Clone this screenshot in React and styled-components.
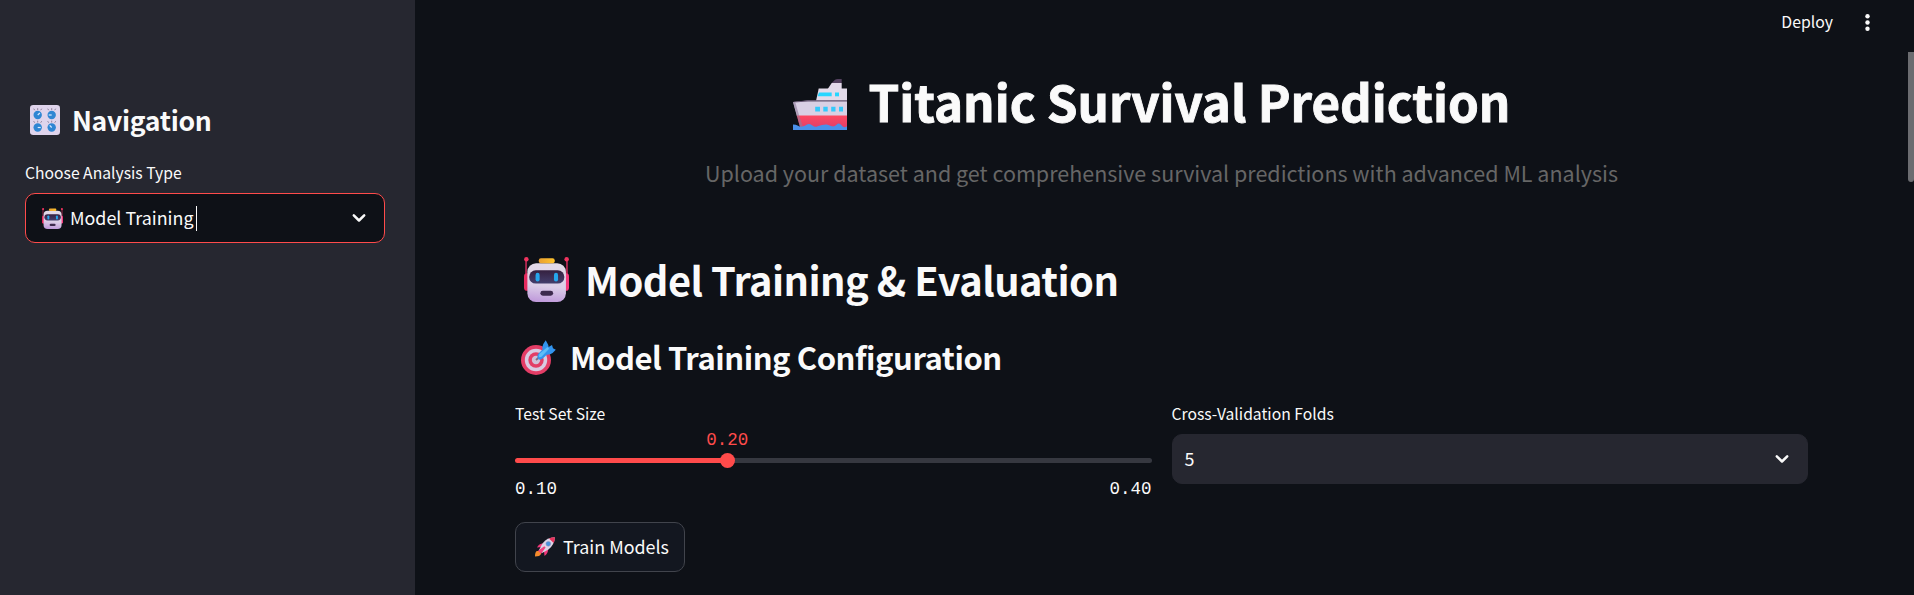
import React from 'react';
import styled, { createGlobalStyle } from 'styled-components';

const GlobalStyle = createGlobalStyle`
  *, *::before, *::after { box-sizing: border-box; }
  body { margin: 0; background: #0e1117; overflow: hidden; }
  h1, h2, h3, p { margin: 0; }
  svg { display: block; flex: none; }
`;

const Page = styled.div`
  display: flex;
  height: 100vh;
  overflow: hidden;
  background: #0e1117;
  color: #fafafa;
  font-family: "Noto Sans CJK SC", "Noto Sans", sans-serif;
  font-size: 17.9px;
`;

const Sidebar = styled.aside`
  flex: none;
  width: 415px;
  padding: 102px 30px 0 25px;
  background: #262730;
`;

const Main = styled.main`
  flex: 1;
  min-width: 0;
  display: flex;
  flex-direction: column;
`;

const Header = styled.header`
  flex: none;
  height: 52px;
  padding: 9px 39px 0 0;
  display: flex;
  justify-content: flex-end;
  gap: 27px;
`;

const DeployButton = styled.button`
  height: 26px;
  padding: 0;
  border: 0;
  background: none;
  color: inherit;
  font: 400 15.8px/26px "Noto Sans CJK SC", sans-serif;
`;

const MenuButton = styled.button`
  height: 27px;
  padding: 0;
  border: 0;
  background: none;
  color: inherit;
  display: flex;
  align-items: center;
`;

const ScrollArea = styled.div`
  flex: 1;
  display: flex;
`;

const Content = styled.section`
  flex: 1;
  padding: 17px 100px 0;
`;

const Scrollbar = styled.div`
  flex: none;
  width: 6px;
  height: 130px;
  background: #6b6c70;
  border-radius: 0 0 3px 3px;
`;

const Title = styled.h1`
  display: flex;
  justify-content: center;
  gap: 22px;
  height: 60px;
  padding: 10px 20px 0 0;
  font-size: 49.3px;
  line-height: 43px;
  font-weight: 700;
  white-space: nowrap;
  -webkit-text-stroke: 0.9px currentColor;

  svg { -webkit-text-stroke: 0; }
`;

const Subtitle = styled.p`
  margin-top: 26px;
  font-size: 21.5px;
  line-height: 36px;
  text-align: center;
  color: #666;
  white-space: nowrap;
`;

const SectionTitle = styled.h2`
  display: flex;
  align-items: center;
  gap: 16px;
  margin-top: 61px;
  padding-left: 9px;
  font-size: 39.8px;
  line-height: 54px;
  font-weight: 700;
  letter-spacing: -0.53px;
`;

const SubsectionTitle = styled.h3`
  display: flex;
  align-items: center;
  gap: 14px;
  margin-top: 30px;
  padding-left: 6px;
  font-size: 31px;
  line-height: 42px;
  font-weight: 700;
  letter-spacing: -0.45px;
`;

const NavTitle = styled.h2`
  display: flex;
  align-items: center;
  gap: 12px;
  padding-left: 5px;
  margin-bottom: 23px;
  font-size: 26.6px;
  line-height: 36px;
  font-weight: 700;
  letter-spacing: -0.3px;
`;

const Columns = styled.div`
  display: grid;
  grid-template-columns: 1fr 1fr;
  gap: 20px;
  margin-top: 24px;
`;

const Field = styled.div`
  display: flex;
  flex-direction: column;
`;

const Label = styled.label`
  font-size: 15.7px;
  line-height: 24px;
`;

const SelectBox = styled.div`
  display: flex;
  align-items: center;
  height: 50px;
  margin-top: 8px;
  padding: 0 15px 0 ${(p) => (p.$active ? '16px' : '12px')};
  border: 1px solid ${(p) => (p.$active ? '#ff4b4b' : '#262730')};
  border-radius: 10px;
  background: ${(p) => (p.$active ? '#0e1117' : '#262730')};
  line-height: 46px;
`;

const SelectValue = styled.span`
  flex: 1;
  display: flex;
  align-items: center;
`;

const ValueText = styled.span`
  margin-left: ${(p) => (p.$spaced ? '7px' : '0')};
  padding-bottom: 2px;
`;

const Caret = styled.i`
  width: 1px;
  height: 25px;
  margin-left: 2px;
  background: #fafafa;
`;

const Mono = styled.span`
  font-family: "Liberation Mono", monospace;
  font-size: 17.5px;
  line-height: 22px;
`;

const SliderValue = styled(Mono)`
  width: 42px;
  margin-left: calc(33.333% - 21px);
  margin-top: 3px;
  color: #ff4b4b;
`;

const Track = styled.div`
  display: flex;
  align-items: center;
  height: 15px;
  margin-top: 2px;
`;

const TrackPart = styled.span`
  flex: ${(p) => p.$share};
  height: 5px;
  border-radius: ${(p) => (p.$filled ? '3px 0 0 3px' : '0 3px 3px 0')};
  background: ${(p) => (p.$filled ? '#ff4b4b' : '#363840')};
`;

const Thumb = styled.span`
  flex: none;
  width: 15px;
  height: 15px;
  margin: 0 -7.5px;
  border-radius: 50%;
  background: #ff4b4b;
  z-index: 1;
`;

const Range = styled.div`
  display: flex;
  justify-content: space-between;
  margin-top: 10px;
`;

const ActionButton = styled.button`
  display: flex;
  align-items: center;
  gap: 8px;
  width: 170px;
  height: 50px;
  margin-top: 22px;
  padding: 0 0 0 19px;
  border: 1px solid #41444c;
  border-radius: 10px;
  background: #131720;
  color: inherit;
  font: 400 17.9px/46px "Noto Sans CJK SC", sans-serif;
  white-space: nowrap;
`;

const ButtonText = styled.span`
  padding-bottom: 2px;
`;

const ShipIcon = () => (
  <svg width="54" height="51" viewBox="0 0 54 51">
    <defs>
      <linearGradient id="hull" x1="0" y1="0" x2="0" y2="1">
        <stop offset="0" stopColor="#ff4860" />
        <stop offset="1" stopColor="#dd3f6b" />
      </linearGradient>
    </defs>
    <path d="M38.7 4h10v6h-14z" fill="#e3d9e9" />
    <path d="M42 .8Q43 0 44.500 0h4.200v4h-10z" fill="#54415f" />
    <path d="M25.700 9.500H54V22H23z" fill="#e3dbea" />
    <path d="M26 13.500h12.700v3.800H24.500z" fill="#27d6ff" />
    <path d="M42 13.500h4v3.800h-4z" fill="#27d6ff" />
    <path d="M0 23l15-1.500H54v16H4z" fill="#d9d0e4" />
    <path d="M1 22.800l14-1.600h39v1.200H15L0 23.500z" fill="#63536f" />
    <path d="M3.800 36.500H54V50H7.500z" fill="url(#hull)" />
    <path d="M0 23l4 13.500L7 48h3L6 36 2.500 24z" fill="#8f7b9b" opacity=".6" />
    <path d="M22.200 27.800H27v4.700h-4.800zM30.300 27.800h4.400v4.700h-4.400zM38.200 27.800h4.300v4.700h-4.300zM46 27.800h4v4.700h-4z" fill="#35c9fb" />
    <path d="M0 45.500q3 0 5 1.300t4.500.8 4.500-2 5 .6 5 1.300 5-1.500 4.500-.5 4.500 1.600 5.500-1.300 5 .5 5.500.9V51H0z" fill="#4a90ea" />
  </svg>
);

const RobotIcon = ({ size }) => (
  <svg width={size} height={size} viewBox="0 0 44 44">
    <defs>
      <linearGradient id="head" x1=".6" y1="0" x2=".5" y2="1">
        <stop offset="0" stopColor="#e3dbe8" />
        <stop offset=".6" stopColor="#dccfe8" />
        <stop offset="1" stopColor="#c09bdb" />
      </linearGradient>
      <linearGradient id="visor" x1="0" y1="0" x2="0" y2="1">
        <stop offset="0" stopColor="#35203f" />
        <stop offset="1" stopColor="#443f6d" />
      </linearGradient>
      <linearGradient id="cap" x1="0" y1="0" x2="1" y2="0">
        <stop offset="0" stopColor="#e9a032" />
        <stop offset="1" stopColor="#ffc42c" />
      </linearGradient>
    </defs>
    <path d="M2 2v16M42 2v16" stroke="#c22b58" strokeWidth="1.600" />
    <circle cx="2.300" cy="2.300" r="2.200" fill="#f0345f" />
    <circle cx="41.700" cy="2.300" r="2.200" fill="#f0345f" />
    <rect x="0" y="16" width="6" height="17" rx="3" fill="#e52a5f" />
    <rect x="38" y="16" width="6" height="17" rx="3" fill="#f43a7c" />
    <rect x="3.300" y="6" width="37.700" height="38" rx="8.500" fill="url(#head)" />
    <rect x="14.500" y="1.200" width="15.500" height="5" rx="2" fill="url(#cap)" />
    <rect x="5" y="13" width="34.500" height="13" rx="6.500" fill="url(#visor)" />
    <rect x="11.300" y="15.500" width="4" height="8.500" rx="2" fill="#25a6ec" />
    <rect x="29.300" y="15.500" width="4" height="8.500" rx="2" fill="#25a6ec" />
    <rect x="16" y="33" width="12.500" height="4.800" rx="2.400" fill="#3d2a4d" />
  </svg>
);

const TargetIcon = () => (
  <svg width="35" height="35" viewBox="0 0 35 35">
    <circle cx="15" cy="20" r="15" fill="#e33d66" />
    <circle cx="15" cy="20" r="11.200" fill="#d8cbe2" />
    <circle cx="15" cy="20" r="7.700" fill="#e33d66" />
    <circle cx="15" cy="20" r="4.200" fill="#cfc0d8" />
    <path d="M15 20l5-4.500" stroke="#777184" strokeWidth="1.800" />
    <path d="M17 18q-1.500-2.500.5-4.500l4-4q-.5-3 .8-5.500L24.700.3l2.600 4.700.3 2 3.400-2 1 3.200 2.800 1.600-3.200 3.200q-2.600 2-5.800 1.700l-3.800 3.600q-2.800 2.300-5 .7z" fill="#3294ee" />
    <path d="M18 17q-1-1.500.5-3.200L26.500 7l1.600 1.700-7 7.500q-1.700 1.800-3.100.8z" fill="#5fbdf8" />
  </svg>
);

const KNOBS = [
  { x: 7.700, y: 10, px: 2.200, py: -2 },
  { x: 21.700, y: 10, px: -3, py: 0 },
  { x: 7.700, y: 22.500, px: 3, py: 0 },
  { x: 21.700, y: 22.500, px: -2, py: -2.200 },
];

const KnobsIcon = () => (
  <svg width="30" height="30" viewBox="0 0 30 30">
    <rect width="30" height="30" rx="3.200" fill="#dfd4ec" />
    {KNOBS.map((k) => (
      <g key={`${k.x}-${k.y}`} transform={`translate(${k.x} ${k.y})`}>
        <path d="M0-5v-1.800M-3-4.800l-1-1.500M3-4.800l1-1.500" stroke="#796c85" strokeWidth=".8" />
        <circle r="4.200" fill="#2f86d3" />
        <path d={`M0 0L${k.px} ${k.py}`} stroke="#dcecff" strokeWidth="1.200" />
      </g>
    ))}
  </svg>
);

const RocketIcon = () => (
  <svg width="20" height="20" viewBox="0 0 20 20">
    <path d="M4.500 14q2 .5 1.500 3-1 2.500-6 2.500 0-5 2-5.500z" fill="#f58a2c" />
    <path d="M8 6.500Q4 6.500 2 10.500l5-.5zM13 12q.5 4-3.500 7l-.5-5z" fill="#f0387a" />
    <path d="M19.800.2Q12 .2 7.500 6.500L4 13l3 3 6.500-3.500Q19.800 7 19.800.2z" fill="#ddd3e6" />
    <path d="M19.800.2q-3-.1-5.800 1.200l4.700 4.600Q20 3 19.800.2z" fill="#e8325c" />
    <path d="M9.300 9.300l1.300 1.300-4.500 6.200L3 13.800z" fill="#f0437f" />
    <circle cx="13.300" cy="6.800" r="2.400" fill="#4b93df" stroke="#8a93b8" strokeWidth=".5" />
  </svg>
);

const ChevronIcon = () => (
  <svg width="20" height="20" viewBox="0 0 20 20">
    <path d="M4.800 7.300l5.200 5.200 5.200-5.200" fill="none" stroke="#fafafa" strokeWidth="2.500" strokeLinecap="round" strokeLinejoin="round" />
  </svg>
);

const DotsIcon = () => (
  <svg width="15" height="19" viewBox="0 0 15 19" fill="#fafafa">
    <circle cx="7.500" cy="3.200" r="2.200" />
    <circle cx="7.500" cy="9.500" r="2.200" />
    <circle cx="7.500" cy="15.800" r="2.200" />
  </svg>
);

export default function App() {
  return (
    <Page>
      <GlobalStyle />
      <Sidebar>
        <NavTitle>
          <KnobsIcon />
          Navigation
        </NavTitle>
        <Field>
          <Label>Choose Analysis Type</Label>
          <SelectBox $active>
            <SelectValue>
              <RobotIcon size={21} />
              <ValueText $spaced>Model Training</ValueText>
              <Caret />
            </SelectValue>
            <ChevronIcon />
          </SelectBox>
        </Field>
      </Sidebar>
      <Main>
        <Header>
          <DeployButton>Deploy</DeployButton>
          <MenuButton aria-label="Menu">
            <DotsIcon />
          </MenuButton>
        </Header>
        <ScrollArea>
          <Content>
            <Title>
              <ShipIcon />
              Titanic Survival Prediction
            </Title>
            <Subtitle>
              Upload your dataset and get comprehensive survival predictions with advanced ML analysis
            </Subtitle>
            <SectionTitle>
              <RobotIcon size={45} />
              Model Training &amp; Evaluation
            </SectionTitle>
            <SubsectionTitle>
              <TargetIcon />
              Model Training Configuration
            </SubsectionTitle>
            <Columns>
              <Field>
                <Label>Test Set Size</Label>
                <SliderValue>0.20</SliderValue>
                <Track>
                  <TrackPart $share={1} $filled />
                  <Thumb />
                  <TrackPart $share={2} />
                </Track>
                <Range>
                  <Mono>0.10</Mono>
                  <Mono>0.40</Mono>
                </Range>
              </Field>
              <Field>
                <Label>Cross-Validation Folds</Label>
                <SelectBox>
                  <SelectValue>
                    <ValueText>5</ValueText>
                  </SelectValue>
                  <ChevronIcon />
                </SelectBox>
              </Field>
            </Columns>
            <ActionButton>
              <RocketIcon />
              <ButtonText>Train Models</ButtonText>
            </ActionButton>
          </Content>
          <Scrollbar />
        </ScrollArea>
      </Main>
    </Page>
  );
}
